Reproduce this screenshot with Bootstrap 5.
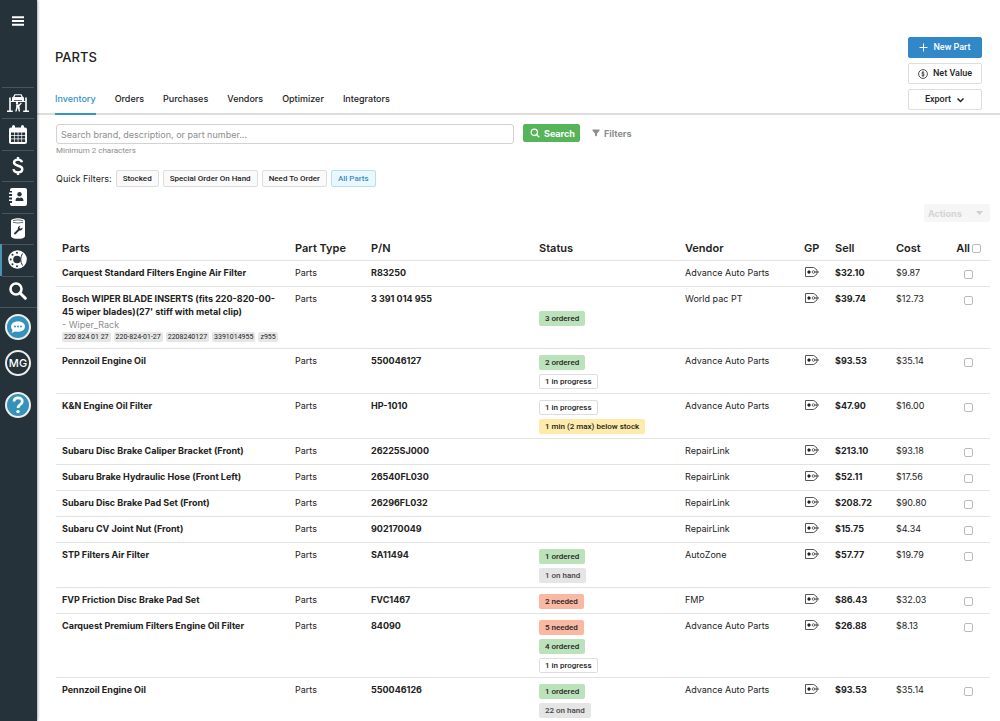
<!DOCTYPE html>
<html lang="en">
<head>
<meta charset="utf-8">
<meta name="viewport" content="width=device-width, initial-scale=1">
<title>Parts</title>
<link href="https://cdn.jsdelivr.net/npm/bootstrap@5.3.0/dist/css/bootstrap.min.css" rel="stylesheet">
<style>
:root { --ink: #222; --blue: #3196c6; --rule: #e6e6e6; }
body { font-family: Inter, Roboto, sans-serif; font-size: 9px; line-height: 13px; color: var(--ink); background: #fff; }
a { text-decoration: none; }
.btn { --bs-btn-line-height: 13px; --bs-btn-border-radius: 2px; }

.side-rail { width: 37px; background: #25323a; box-shadow: 0 0 3px rgba(0,0,0,.6); z-index: 2; }
.side-rail a, .side-rail button { color: #fff; }
.rail-menu { height: 40px; background: none; border: 0; padding: 0 2px 0 0; }
.rail-nav { height: 221px; margin-top: 47px; border-bottom: 1px solid #4a555b; }
.rail-nav a { flex: 1 1 0; border-left: 2px solid transparent; position: relative; padding-right: 4px; }
.rail-nav a::before { content: ""; position: absolute; top: 0; left: 0; right: 3px; border-top: 1px solid #4a555b; }
.rail-nav a.active { border-left-color: #4d93b3; }
.rail-round { padding: 6px 1px 0 0; }
.round-btn { width: 26px; height: 26px; border: 2px solid #eee; border-radius: 50%; font: 500 11px Inter, sans-serif; }
.round-blue { background: #3592ba; }

.page-head { border-bottom: 2px solid #ddd; }
.page-title { font-size: 13px; line-height: 16px; font-weight: 500; margin: 49px 0 26px; }
.tab-link { color: var(--ink); font-weight: 500; padding-bottom: 7px; border-bottom: 2px solid transparent; margin-bottom: -2px; line-height: 15px; }
.tab-link.active { color: var(--blue); border-color: var(--blue); }
.head-actions { width: 74px; gap: 5px; }
.head-actions .btn { font: 500 9px/13px Roboto, sans-serif; height: 21px; padding: 0; gap: 5px; }
.btn-new { --bs-btn-bg: #3188c8; --bs-btn-color: #fff; --bs-btn-border-color: #3188c8; }
.btn-plain { --bs-btn-bg: #fff; --bs-btn-color: #222; --bs-btn-border-color: #ddd; }

.search-box { flex: 0 1 458px; }
.search-box .form-control { font-size: 9px; line-height: 13px; height: 20px; padding: 0 4px; border-color: #d2d2d2; border-radius: 3px; }
.search-box .form-control::placeholder { color: #8d8d8d; }
.hint { font: 8px/14px Roboto, sans-serif; color: #8d8d8d; }
.btn-find { --bs-btn-bg: #57b559; --bs-btn-color: #fff; --bs-btn-border-color: #57b559; font-size: 9px; font-weight: 700; height: 18px; padding: 0 4px 0 6px; gap: 4px; }
.btn-filters { color: #8d8d8d; font-size: 9px; font-weight: 700; height: 18px; padding: 0; gap: 4px; border: 0; }
.btn-quick { font: 500 8px/12px Roboto, sans-serif; height: 17px; padding: 0 6px; --bs-btn-bg: #fafafa; --bs-btn-color: #222; --bs-btn-border-color: #ddd; }
.btn-quick.chosen { --bs-btn-bg: #eaf7fd; --bs-btn-color: #3390c4; --bs-btn-border-color: #b8dff0; }
.btn-actions { width: 66px; height: 18px; padding: 0 7px 0 4px; border: 0; font-size: 9px; font-weight: 700; --bs-btn-disabled-bg: #f6f6f6; --bs-btn-disabled-color: #d4d4d4; --bs-btn-disabled-opacity: 1; }

.parts-table { table-layout: fixed; --bs-table-color: #222; border-color: #e2e2e2; }
.parts-table > :not(caption) > * > * { padding: 5px 0 7px 5px; line-height: 13px; border-bottom-width: 1px; }
.parts-table > thead > tr > th { font-size: 11px; font-weight: 600; padding-bottom: 5px; padding-top: 6px; }
.parts-table > tbody > tr > .name-cell { padding-right: 10px; padding-left: 6px; }
.parts-table > thead > tr > .name-cell { padding-left: 6px; }
.parts-table > tbody > tr > .status-cell { padding-bottom: 4px; padding-top: 6px; vertical-align: middle; }
.c-type { width: 76px } .c-pn { width: 168px } .c-status { width: 146px } .c-vendor { width: 119px }
.c-gp { width: 31px } .c-sell { width: 61px } .c-cost { width: 56px } .c-check { width: 43px }
.status-tag { font: 500 8px/13px Roboto, sans-serif; height: 15px; border: 1px solid transparent; border-radius: 2px; padding: 0 5px; }
.tag-green { background: #bce2bc; } .tag-white { background: #fff; border-color: #ddd; }
.tag-grey { background: #e5e5e5; color: #444; } .tag-red { background: #fab8a3; } .tag-yellow { background: #fdebab; }
.alias-row { gap: 3px; margin: 1px 0 -1px; }
.alias { font: 7px/10px Roboto, sans-serif; background: #e6e6e6; border-radius: 2px; padding: 0 2px; }
.gp-icon { display: block; margin: 1px 0 0 1px; }
.tick { appearance: none; width: 9px; height: 9px; border: 1px solid #bbb; border-radius: 2px; background: #fff; margin: 0; display: block; }
.tick:checked { background: var(--blue); }
.tick-all { gap: 2px; padding-right: 9px; }
.tick-one { padding: 4px 5px 0 0; }
</style>
</head>
<body class="vh-100 overflow-hidden d-flex">
<svg class="d-none">
  <symbol id="gp" viewBox="0 0 14 10"><path d="M.5.5h8.300L12 3v4L8.800 9.500H.5z" fill="none" stroke="#444" stroke-width=".9"/><circle cx="4" cy="5" r="1.500" fill="#222"/><path d="M3.700 3h.6v4h-.6zM2 4.700h4v.6H2z" fill="#222"/><circle cx="8.500" cy="5" r="1.300" fill="none" stroke="#444" stroke-width=".8"/><path d="M9.500 5H14" stroke="#444"/></symbol>
</svg>

<nav class="side-rail d-flex flex-column flex-shrink-0 vh-100" aria-label="Main">
  <button class="rail-menu" aria-label="Menu"><svg width="12" height="10" viewBox="0 0 12 10"><path d="M0 1.200h12M0 5h12M0 8.800h12" stroke="#fff" stroke-width="2"/></svg></button>
  <div class="rail-nav d-flex flex-column">
    <a href="#" class="d-flex align-items-center justify-content-center" aria-label="Shop"><svg width="22" height="18" viewBox="0 0 22 18" fill="#fff"><path d="M2.200 3.500h1.600v13h2V18H0v-1.500h2.200zM18.200 3.500h1.600v13H22V18h-5.800v-1.500h2z"/><path d="M5 3.500L6 3 7.500.3h7L16 3l1 .5v4h-2V6.300H7v1.200H5z"/><path d="M8.300 1.200h5.400L14.500 3h-7z" fill="#25323a"/><path d="M3.500 7h15v1h-15z"/><circle cx="10" cy="9" r="1.200"/><path d="M9 10.500h3l2-2 .8.8-2.300 2.700.5 5.500h-1.300l-.9-4-1.300 4H8.200L9.300 13z"/></svg></a>
    <a href="#" class="d-flex align-items-center justify-content-center" aria-label="Calendar"><svg width="18" height="19" viewBox="0 0 18 19"><path d="M2 2.500h1V1.500a1.500 1.500 0 013 0v1h6v-1a1.500 1.500 0 013 0v1h1a2 2 0 012 2V17a2 2 0 01-2 2H2a2 2 0 01-2-2V4.500a2 2 0 012-2z" fill="#fff"/><path d="M2 7.500h3v2.700H2zm3.700 0h3v2.700h-3zm3.700 0h3v2.700h-3zm3.700 0h3v2.700h-3zM2 10.900h3v2.700H2zm3.700 0h3v2.700h-3zm3.700 0h3v2.700h-3zm3.700 0h3v2.700h-3zM2 14.300h3V17H2zm3.700 0h3V17h-3zm3.700 0h3V17h-3zm3.700 0h3V17h-3z" fill="#25323a"/></svg></a>
    <a href="#" class="d-flex align-items-center justify-content-center" aria-label="Payments"><svg width="12" height="20" viewBox="0 0 12 20"><path d="M10 6.200C9.500 4 7.900 3.600 6 3.600c-2.500 0-4 1.100-4 3 0 4.300 8.300 2 8.300 6.500 0 2.200-1.800 3.300-4.300 3.300-2.400 0-4.200-.9-4.500-3.200M6 1v3M6 16v3" fill="none" stroke="#fff" stroke-width="2.400"/></svg></a>
    <a href="#" class="d-flex align-items-center justify-content-center" aria-label="Contacts"><svg width="18" height="18" viewBox="0 0 18 18"><path d="M3 0h13a2 2 0 012 2v14a2 2 0 01-2 2H3a2 2 0 01-2-2v-1h2v-2H0v-1.500h3v-2H0V8h3V6H0V4.500h3V3H1V2a2 2 0 012-2z" fill="#fff"/><circle cx="10.500" cy="6.300" r="2.200" fill="#25323a"/><path d="M6.500 13c0-2.600 1.500-3.500 2.700-3.500l1.300.7 1.300-.7c1.200 0 2.700.9 2.700 3.500z" fill="#25323a"/></svg></a>
    <a href="#" class="d-flex align-items-center justify-content-center" aria-label="Canned jobs"><svg width="14" height="21" viewBox="0 0 14 21"><path d="M0 3C0-.6 14-.6 14 3v15c0 3.800-14 3.800-14 0z" fill="#fff"/><path d="M2 2.600q5-1.500 10 0M2 4.300q5 1.500 10 0" fill="none" stroke="#25323a" stroke-width=".7"/><path d="M4 15.500L7.500 12" stroke="#25323a" stroke-width="1.800" stroke-linecap="round"/><path d="M9.500 7.800L8.400 9.200l.6 1.200 1.300.2 1-1.400c.7 2-.8 3.900-2.900 3.300C6 11.700 6.500 7.900 9.500 7.800z" fill="#25323a"/></svg></a>
    <a href="#" class="active d-flex align-items-center justify-content-center" aria-label="Parts"><svg width="19" height="19" viewBox="0 0 19 19"><circle cx="9.500" cy="9.500" r="9.300" fill="#fff"/><circle cx="9" cy="9.500" r="3.800" fill="#25323a"/><g fill="#25323a"><circle cx="4.500" cy="4.700" r="1"/><circle cx="2.700" cy="9.500" r="1"/><circle cx="4.500" cy="14.300" r="1"/><circle cx="9" cy="16.300" r="1"/><circle cx="9" cy="2.700" r="1"/></g><path d="M14.500 3.500q-3.500 6 0 12" fill="none" stroke="#25323a"/></svg></a>
    <a href="#" class="d-flex align-items-center justify-content-center" aria-label="Search"><svg width="18" height="18" viewBox="0 0 18 18"><circle cx="7" cy="7" r="5.500" fill="none" stroke="#fff" stroke-width="2.600"/><path d="M11 11l5.300 5.300" stroke="#fff" stroke-width="3" stroke-linecap="round"/></svg></a>
  </div>
  <div class="rail-round d-flex flex-column align-items-center">
    <button class="round-btn round-blue p-0 d-flex align-items-center justify-content-center" aria-label="Chat"><svg width="14" height="12" viewBox="0 0 14 12"><ellipse cx="7" cy="5.500" rx="7" ry="5.300" fill="#fff"/><path d="M2 8l-1.500 4 4.500-2z" fill="#fff"/><g fill="#3592ba"><circle cx="4" cy="5.500" r="1"/><circle cx="7" cy="5.500" r="1"/><circle cx="10" cy="5.500" r="1"/></g></svg></button>
    <button class="round-btn bg-transparent p-0 d-flex align-items-center justify-content-center" style="margin:10px 0 16px">MG</button>
    <button class="round-btn round-blue p-0 d-flex align-items-center justify-content-center" aria-label="Help"><svg width="12" height="18" viewBox="0 0 12 18"><path d="M2 5.500c.2-5 8.300-4.500 8.300 0C10.300 8.500 6 8.500 6 12" fill="none" stroke="#fff" stroke-width="2.700"/><circle cx="6" cy="15.600" r="1.700" fill="#fff"/></svg></button>
  </div>
</nav>

<main class="flex-grow-1 overflow-hidden">
  <header class="page-head d-flex justify-content-between">
    <div class="d-flex flex-column" style="padding-left:18px">
      <h1 class="page-title">PARTS</h1>
      <nav class="d-flex mt-auto" style="gap:19px" aria-label="Parts sections">
        <a class="tab-link active" href="#">Inventory</a><a class="tab-link" href="#">Orders</a><a class="tab-link" href="#">Purchases</a><a class="tab-link" href="#">Vendors</a><a class="tab-link" href="#">Optimizer</a><a class="tab-link" href="#">Integrators</a>
      </nav>
    </div>
    <div class="head-actions d-flex flex-column" style="margin:37px 18px 3px 0">
      <button class="btn btn-new d-flex align-items-center justify-content-center"><svg width="9" height="9" viewBox="0 0 9 9"><path d="M4.500.5v8M.5 4.500h8" stroke="#fff"/></svg>New Part</button>
      <button class="btn btn-plain d-flex align-items-center justify-content-center"><svg width="10" height="10" viewBox="0 0 10 10" fill="none" stroke="#222" stroke-width=".8"><circle cx="5" cy="5" r="4.400"/><path d="M6.400 3.800C6 2.900 3.700 3 3.700 4c0 1.300 2.700.7 2.700 2 0 1.100-2.400 1.100-2.900.2M5 2.200v5.600" stroke-width=".7"/></svg>Net Value</button>
      <button class="btn btn-plain d-flex align-items-center justify-content-center">Export<svg width="9" height="6" viewBox="0 0 9 6"><path d="M1.500 1.500l3 3 3-3" fill="none" stroke="#222" stroke-width="1.500"/></svg></button>
    </div>
  </header>

  <section style="padding:9px 10px 0 19px">
    <form class="d-flex align-items-start">
      <div class="search-box" style="margin-right:9px">
        <input id="q" type="text" class="form-control" placeholder="Search brand, description, or part number..." aria-label="Search parts" aria-describedby="qhint">
        <div id="qhint" class="hint">Minimum 2 characters</div>
      </div>
      <button type="button" class="btn btn-find d-flex align-items-center"><svg width="10" height="10" viewBox="0 0 10 10" fill="none" stroke="#fff" stroke-width="1.300"><circle cx="4.300" cy="4.300" r="3.200"/><path d="M6.700 6.700l2.600 2.600"/></svg>Search</button>
      <button type="button" class="btn btn-filters d-flex align-items-center" style="margin-left:12px"><svg width="8" height="8" viewBox="0 0 8 8"><path d="M.5.5h7v1.300L5 4.500v3L3 6.500v-2L.5 1.800z" fill="#8d8d8d"/></svg>Filters</button>
    </form>
    <div class="d-flex align-items-center" style="gap:4px;margin-top:12px">
      <span>Quick Filters:</span>
      <button class="btn btn-quick">Stocked</button><button class="btn btn-quick">Special Order On Hand</button><button class="btn btn-quick">Need To Order</button><button class="btn btn-quick chosen">All Parts</button>
    </div>
    <div class="d-flex justify-content-end" style="margin-top:17px">
      <button class="btn btn-actions d-flex align-items-center justify-content-between" disabled>Actions<svg width="7" height="4" viewBox="0 0 7 4"><path d="M0 0h7L3.500 4z" fill="#cfcfcf"/></svg></button>
    </div>

    <table class="table parts-table mb-0" style="margin-top:14px">
      <colgroup><col><col class="c-type"><col class="c-pn"><col class="c-status"><col class="c-vendor"><col class="c-gp"><col class="c-sell"><col class="c-cost"><col class="c-check"></colgroup>
      <thead><tr><th class="name-cell">Parts</th><th>Part Type</th><th>P/N</th><th>Status</th><th>Vendor</th><th>GP</th><th>Sell</th><th>Cost</th><th><label class="tick-all d-flex align-items-center justify-content-end">All<input type="checkbox" class="tick"></label></th></tr></thead>
      <tbody id="rows"></tbody>
    </table>
  </section>
</main>
<script>
const parts = [
  ["Carquest Standard Filters Engine Air Filter", "R83250", [], "Advance Auto Parts", "$32.10", "$9.87"],
  ["Bosch WIPER BLADE INSERTS (fits 220-820-00-45 wiper blades)(27' stiff with metal clip)", "3 391 014 955", ["green:3 ordered"], "World pac PT", "$39.74", "$12.73", "Wiper_Rack", ["220 824 01 27", "220-824-01-27", "2208240127", "3391014955", "z955"]],
  ["Pennzoil Engine Oil", "550046127", ["green:2 ordered", "white:1 in progress"], "Advance Auto Parts", "$93.53", "$35.14"],
  ["K&amp;N Engine Oil Filter", "HP-1010", ["white:1 in progress", "yellow:1 min (2 max) below stock"], "Advance Auto Parts", "$47.90", "$16.00"],
  ["Subaru Disc Brake Caliper Bracket (Front)", "26225SJ000", [], "RepairLink", "$213.10", "$93.18"],
  ["Subaru Brake Hydraulic Hose (Front Left)", "26540FL030", [], "RepairLink", "$52.11", "$17.56"],
  ["Subaru Disc Brake Pad Set (Front)", "26296FL032", [], "RepairLink", "$208.72", "$90.80"],
  ["Subaru CV Joint Nut (Front)", "902170049", [], "RepairLink", "$15.75", "$4.34"],
  ["STP Filters Air Filter", "SA11494", ["green:1 ordered", "grey:1 on hand"], "AutoZone", "$57.77", "$19.79"],
  ["FVP Friction Disc Brake Pad Set", "FVC1467", ["red:2 needed"], "FMP", "$86.43", "$32.03"],
  ["Carquest Premium Filters Engine Oil Filter", "84090", ["red:5 needed", "green:4 ordered", "white:1 in progress"], "Advance Auto Parts", "$26.88", "$8.13"],
  ["Pennzoil Engine Oil", "550046126", ["green:1 ordered", "grey:22 on hand", "white:1 in progress"], "Advance Auto Parts", "$93.53", "$35.14"]
];
document.getElementById("rows").innerHTML = parts.map(([name, pn, tags, vendor, sell, cost, bin, aliases]) => `
  <tr>
    <td class="name-cell"><div class="fw-bold">${name}</div>${bin ? `<div style="color:#8d8d8d">- ${bin}</div><div class="alias-row d-flex">${aliases.map(a => `<span class="alias text-nowrap">${a}</span>`).join("")}</div>` : ""}</td>
    <td>Parts</td><td class="fw-bold">${pn}</td>
    <td class="status-cell"><div class="d-flex flex-column align-items-start" style="gap:4px">${tags.map(t => { const [c, s] = t.split(":"); return `<span class="status-tag tag-${c}">${s}</span>`; }).join("")}</div></td>
    <td>${vendor}</td>
    <td><svg class="gp-icon" width="14" height="10"><use href="#gp"/></svg></td>
    <td class="fw-bold">${sell}</td><td>${cost}</td>
    <td><div class="tick-one d-flex justify-content-center"><input type="checkbox" class="tick" aria-label="Select ${pn}"></div></td>
  </tr>`).join("");
</script>
<script src="https://cdn.jsdelivr.net/npm/bootstrap@5.3.0/dist/js/bootstrap.bundle.min.js"></script>
</body>
</html>
